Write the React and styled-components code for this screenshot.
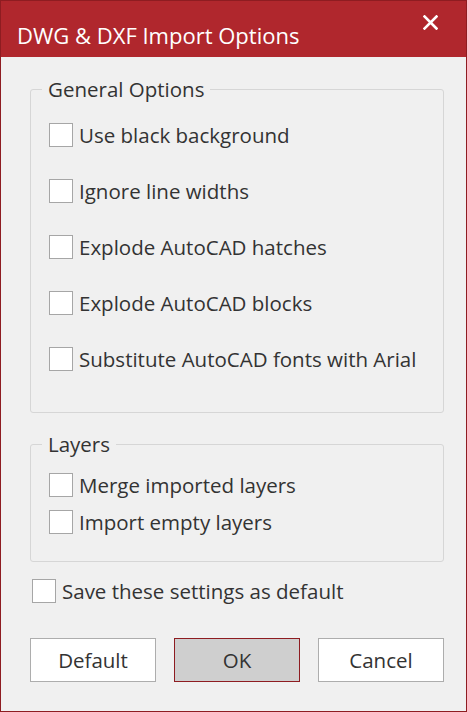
import React from 'react';
import styled, { createGlobalStyle } from 'styled-components';

const GlobalStyle = createGlobalStyle`
  html, body {
    margin: 0;
    padding: 0;
    background: #f0f0f0;
  }
  body {
    font-family: "Open Sans", "Noto Sans", "Liberation Sans", sans-serif;
  }
`;

const Window = styled.div`
  box-sizing: border-box;
  width: 467px;
  height: 712px;
  border: 1px solid #8e1c21;
  background: #f0f0f0;
  display: flex;
  flex-direction: column;
`;

const TitleBar = styled.div`
  height: 56px;
  background: #b0272d;
  display: flex;
  align-items: center;
  justify-content: space-between;
  padding: 0 28px 0 16px;
  flex-shrink: 0;
`;

const Title = styled.div`
  color: #ffffff;
  font-size: 22px;
  padding-top: 12px;
`;

const CloseButton = styled.button`
  border: none;
  background: none;
  padding: 0;
  display: flex;
  margin-top: -14px;
  cursor: pointer;
`;

const Body = styled.div`
  padding: 20px 22px 0 29px;
  display: flex;
  flex-direction: column;
`;

const Group = styled.fieldset`
  margin: ${p => p.$top}px 0 0;
  border: 1px solid #d6d6d6;
  border-radius: 3px;
  padding: ${p => p.$padTop}px 18px ${p => p.$padBottom}px;
  display: flex;
  flex-direction: column;
  gap: ${p => p.$gap}px;
`;

const Legend = styled.legend`
  font-size: 20.5px;
  line-height: 24px;
  color: #333;
  padding: 0 6px;
  margin-left: -7px;
`;

const Row = styled.label`
  display: flex;
  align-items: center;
  gap: 6px;
  height: 24px;
  font-size: 20.5px;
  color: #333;
`;

const Box = styled.span`
  box-sizing: border-box;
  width: 24px;
  height: 24px;
  border: 1px solid #a6a6a6;
  background: #ffffff;
  flex-shrink: 0;
`;

const SaveRow = styled(Row)`
  margin: 17px 0 0 2px;
`;

const Buttons = styled.div`
  display: grid;
  grid-template-columns: repeat(3, 126px);
  justify-content: space-between;
  margin-top: 35px;
`;

const Button = styled.button`
  height: 44px;
  border: 1px solid ${p => (p.$primary ? '#8e1c21' : '#adadad')};
  background: ${p => (p.$primary ? '#cfcfcf' : '#ffffff')};
  color: #333;
  font-family: inherit;
  font-size: 20.5px;
  padding: 0;
`;

function Check({ children }) {
  return (
    <Row>
      <Box />
      {children}
    </Row>
  );
}

export default function App() {
  return (
    <>
      <GlobalStyle />
      <Window>
        <TitleBar>
          <Title>DWG &amp; DXF Import Options</Title>
          <CloseButton aria-label="Close">
            <svg width="15" height="15" viewBox="0 0 15 15">
              <path d="M1.5 1.5 L13.5 13.5 M13.5 1.5 L1.5 13.5" stroke="#fff" strokeWidth="2.6" strokeLinecap="square" />
            </svg>
          </CloseButton>
        </TitleBar>
        <Body>
          <Group $top={0} $padTop={22} $padBottom={41} $gap={32}>
            <Legend>General Options</Legend>
            <Check>Use black background</Check>
            <Check>Ignore line widths</Check>
            <Check>Explode AutoCAD hatches</Check>
            <Check>Explode AutoCAD blocks</Check>
            <Check>Substitute AutoCAD fonts with Arial</Check>
          </Group>
          <Group $top={19} $padTop={17} $padBottom={27} $gap={13}>
            <Legend>Layers</Legend>
            <Check>Merge imported layers</Check>
            <Check>Import empty layers</Check>
          </Group>
          <SaveRow>
            <Box />
            Save these settings as default
          </SaveRow>
          <Buttons>
            <Button>Default</Button>
            <Button $primary>OK</Button>
            <Button>Cancel</Button>
          </Buttons>
        </Body>
      </Window>
    </>
  );
}
